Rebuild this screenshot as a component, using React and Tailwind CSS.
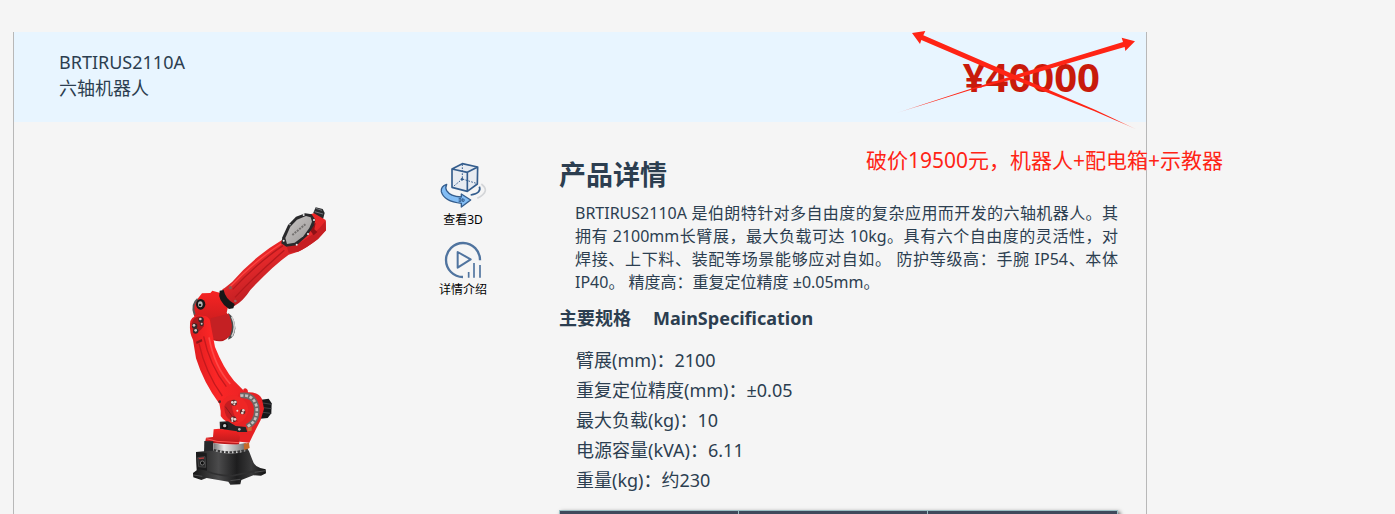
const specs = [
  { label: "臂展(mm)", value: "2100" },
  { label: "重复定位精度(mm)", value: "±0.05" },
  { label: "最大负载(kg)", value: "10" },
  { label: "电源容量(kVA)", value: "6.11" },
  { label: "重量(kg)", value: "约230" },
]

function RobotArm() {
  return (
    <svg viewBox="0 0 480 900" className="h-[300px] w-[160px] shrink-0" role="img" aria-label="BRTIRUS2110A">
      <defs>
        <linearGradient id="upper" x1="0" y1="0" x2="0.6" y2="1">
          <stop offset="0.3" stopColor="#f3211f" />
          <stop offset="0.55" stopColor="#e3282a" />
          <stop offset="0.75" stopColor="#c42024" />
        </linearGradient>
        <linearGradient id="lower" x1="0" y1="0.5" x2="1" y2="0.3">
          <stop offset="0" stopColor="#d81b1e" />
          <stop offset="0.4" stopColor="#fb2626" />
          <stop offset="1" stopColor="#e62224" />
        </linearGradient>
        <linearGradient id="joint" x1="0" y1="0" x2="0" y2="1">
          <stop offset="0" stopColor="#f82423" />
          <stop offset="1" stopColor="#b4191c" />
        </linearGradient>
        <linearGradient id="base" x1="0" y1="0" x2="1" y2="0">
          <stop offset="0" stopColor="#151515" />
          <stop offset="0.35" stopColor="#4b4b4c" />
          <stop offset="0.6" stopColor="#1d1d1e" />
          <stop offset="0.8" stopColor="#39393a" />
          <stop offset="1" stopColor="#111" />
        </linearGradient>
        <linearGradient id="steel" x1="0" y1="0" x2="1" y2="0">
          <stop offset="0" stopColor="#777" />
          <stop offset="0.3" stopColor="#e9e9e9" />
          <stop offset="0.7" stopColor="#a2a2a2" />
          <stop offset="1" stopColor="#606060" />
        </linearGradient>
        <linearGradient id="plate" x1="0" y1="0" x2="1" y2="1">
          <stop offset="0" stopColor="#c9c6c5" />
          <stop offset="1" stopColor="#9c9998" />
        </linearGradient>
      </defs>

      {/* forearm, wrist flange and cover plate */}
      <path d="M400 38 L407 22 L428 27 L434 39 L429 58 L405 54Z" fill="#28292b" />
      <path d="M407 25 L426 31 M404 35 L429 42" stroke="#72757a" strokeWidth="3" />
      <path d="M305 121 Q222 170 157 245 Q137 262 127 268 Q127 302 162 319 Q190 303 211 270 Q280 196 326 164 L354 155 Q378 145 414 117 L438 91 L437 60 L402 40 L370 48Z" fill="url(#upper)" />
      <path d="M158 268 Q236 185 309 137 M165 292 Q226 227 313 151" stroke="#b5191d" strokeWidth="4" fill="none" />
      <path d="M149 262 Q225 182 303 132" stroke="#ff4340" strokeWidth="4" fill="none" />
      <path d="M321 141 Q369 132 418 85 L437 62 L438 91 L414 117 Q378 145 354 155 L326 158Z" fill="#c61e22" />
      <path d="M390 91 L393 76 L407 69 L403 88 L412 96 L401 106Z" fill="#8e1015" />
      <path d="M307 112 L324 75 L348 50 L376 40 L395 43 L406 59 L402 76 L382 107 L350 136 L319 140 L304 130Z" fill="#29292b" />
      <path d="M316 114 L331 80 L351 59 L378 48 L392 52 L396 65 L388 84 L370 109 L344 128 L321 132Z" fill="url(#plate)" />
      <path d="M337 105 L377 72" stroke="#73706f" strokeWidth="6" strokeDasharray="6 3" />
      <g fill="#efefef">
        <circle cx="311" cy="122" r="3" />
        <circle cx="330" cy="74" r="2" />
        <circle cx="371" cy="45" r="3" />
        <circle cx="402" cy="60" r="3" />
        <circle cx="384" cy="102" r="3" />
        <circle cx="350" cy="134" r="3" />
      </g>
      <circle cx="151" cy="263" r="5" fill="#8f5551" />
      <circle cx="166" cy="303" r="4" fill="#92696a" />

      {/* elbow */}
      <path d="M145 339 Q166 354 166 385 Q165 412 145 419Z" fill="#4a4a4b" />
      <path d="M155 350 Q171 382 155 410" stroke="#d1d1d1" strokeWidth="5" fill="none" />
      <path d="M53 296 L66 280 L91 279 L97 272 L119 278 L145 316 L140 338 Q158 357 155 389 Q150 415 129 423 Q105 427 89 415 L42 348 L42 315Z" fill="url(#joint)" />
      <path d="M92 355 L146 341 Q158 367 151 406 Q122 429 94 414Z" fill="#c42023" />
      <path d="M119 272 L131 270 Q136 298 164 312 L160 325 L147 327 Q111 302 119 272Z" fill="#171718" />
      <path d="M44 344 Q33 313 53 297" stroke="#58595a" strokeWidth="6" fill="none" />
      <ellipse cx="62" cy="313" rx="14" ry="16" fill="#181818" />
      <ellipse cx="61" cy="313" rx="7" ry="9" fill="#b8b8b8" />
      <circle cx="60" cy="315" r="4" fill="#222" />

      {/* lower arm */}
      <path d="M30 372 Q30 350 57 346 L78 349 Q91 354 92 373 L105 441 Q130 504 162 542 L208 589 L192 652 L136 658 Q123 643 118 611 Q71 549 48 475 L39 420 Q28 399 30 372Z" fill="url(#lower)" />
      <path d="M71 409 Q88 494 139 560 M57 431 Q76 518 127 588" stroke="#c4191d" strokeWidth="4" fill="none" />
      <path d="M87 412 Q103 499 151 552" stroke="#ff4a48" strokeWidth="5" fill="none" />
      <path d="M35 371 Q38 350 63 349 Q76 352 71 379 Q58 399 41 400Z" fill="#a7191d" />
      <path d="M48 425 L65 417 L67 424 L50 432Z" fill="#8d1719" />
      <g fill="#302a2a">
        <circle cx="63" cy="359" r="8" />
        <circle cx="44" cy="378" r="8" />
        <circle cx="47" cy="393" r="8" />
        <circle cx="65" cy="372" r="6" />
      </g>
      <g fill="#d8c5c3">
        <circle cx="61" cy="357" r="4" />
        <circle cx="42" cy="376" r="4" />
        <circle cx="47" cy="391" r="4" />
        <circle cx="65" cy="371" r="3" />
      </g>

      {/* shoulder */}
      <path d="M243 599 L266 596 L275 610 L274 640 L263 654 L241 656Z" fill="#161719" />
      <path d="M249 609 L274 613 M250 623 L274 626 M249 637 L272 640" stroke="#434447" strokeWidth="3" />
      <path d="M176 581 L190 576 L190 568 Q197 561 203 570 L204 577 Q236 576 246 597 L252 626 L242 660 L218 707 L208 728 L166 724 L130 680Z" fill="#e62224" />
      <path d="M181 587 Q219 582 229 617 Q237 662 201 680" fill="none" stroke="#6d6866" strokeWidth="17" />
      <path d="M181 587 Q219 582 229 617 Q237 662 201 680" fill="none" stroke="#c5c0be" strokeWidth="8" strokeDasharray="9 5" />
      <path d="M122 621 Q127 586 160 585 Q200 593 205 628 Q202 661 174 671 Q138 674 122 648Z" fill="#ef2625" />
      <path d="M133 619 Q138 600 160 599 Q148 627 174 665 Q133 666 133 619Z" fill="#c41d20" />
      <path d="M136 620 L156 648" stroke="#76171a" strokeWidth="2" />
      <g fill="#59292a">
        <circle cx="162" cy="608" r="9" />
        <circle cx="188" cy="635" r="8" />
        <circle cx="160" cy="658" r="9" />
        <circle cx="119" cy="605" r="4" />
      </g>
      <g fill="#ead8d3">
        <circle cx="157" cy="607" r="4" />
        <circle cx="166" cy="606" r="4" />
        <circle cx="163" cy="613" r="3" />
        <circle cx="172" cy="632" r="3" />
        <circle cx="190" cy="631" r="4" />
        <circle cx="187" cy="639" r="4" />
        <circle cx="157" cy="656" r="4" />
        <circle cx="165" cy="658" r="4" />
        <circle cx="157" cy="663" r="3" />
      </g>

      {/* turntable */}
      <path d="M119 665 L144 664 L167 678 L197 681 L202 696 L160 696 L120 687Z" fill="#232325" />
      <circle cx="134" cy="678" r="10" fill="#101011" />
      <circle cx="134" cy="677" r="5" fill="#c6c6c6" />
      <circle cx="178" cy="688" r="4" fill="#b8b8b8" />
      <path d="M202 683 L215 680 L215 692 L203 694Z" fill="#ce6a36" />
      <path d="M101 688 L118 686 L171 694 L180 710 L177 735 L101 730 L76 723 L78 713 L99 711Z" fill="url(#joint)" />
      <path d="M79 716 L111 724 L177 728" stroke="#ff5a55" strokeWidth="3" fill="none" />
      <path d="M101 729 Q139 741 197 729 L204 750 Q156 765 101 750Z" fill="url(#steel)" />
      <path d="M101 750 Q153 765 207 748" stroke="#39393a" strokeWidth="7" strokeDasharray="8 4" fill="none" />
      <path d="M191 731 L207 728 L209 744 L193 750Z" fill="#c66a28" />

      {/* base */}
      <path d="M73 723 L100 724 L100 761 L72 758Z" fill="#262729" />
      <path d="M48 756 L79 753 L101 752 Q154 770 206 751 L217 779 Q223 800 241 804 L257 808 L258 820 L243 827 L220 826 L184 840 L181 853 L151 854 L145 845 L80 834 L64 840 L40 832 L39 819 L50 811Z" fill="url(#base)" />
      <path d="M48 757 L80 760 L81 812 L51 806Z" fill="#1b1b1c" />
      <path d="M53 773 L75 770 L77 802 L56 800Z" fill="#29292a" stroke="#555" strokeWidth="2" />
      <path d="M56 776 L72 774" stroke="#b0393a" strokeWidth="4" />
      <circle cx="67" cy="789" r="6" fill="#0c0c0c" stroke="#989898" strokeWidth="2" />
      <path d="M81 814 Q117 829 159 827 L222 814" stroke="#303031" strokeWidth="5" fill="none" />
      <path d="M151 842 L181 838 M41 825 L67 829 M224 817 L257 812" stroke="#4d4d4e" strokeWidth="3" />
    </svg>
  )
}

function View3dIcon() {
  return (
    <svg viewBox="27 36 144 144" className="size-12" fill="none" aria-hidden="true">
      <path d="M66 57 L97 41 L143 51 L142 102 L112 124 L66 112Z" fill="#e7ebf1" />
      <path d="M66 57 L97 41 L143 51 L112 67Z M66 57 L66 112 L112 124 L112 67 M143 51 L142 102 L112 124" stroke="#345d8d" strokeWidth="5" strokeLinejoin="round" />
      <path d="M97 43 L97 87 L142 101 M97 87 L67 112" stroke="#345d8d" strokeWidth="3" strokeDasharray="5 4" />
      <circle cx="96" cy="88" r="4" fill="#345d8d" />
      <path d="M50 103 Q32 108 34 125 Q42 155 94 160 L94 171 L122 150 L94 132 L94 141 Q60 139 50 122 Q45 113 50 103Z" fill="#83bdf4" stroke="#345d8d" strokeWidth="4" strokeLinejoin="round" />
      <path d="M86 146 h7 v8 h-7 M86 150 h6 M97 146 q9 1 5 8 h-5z" stroke="#345d8d" strokeWidth="3" />
      <path d="M148 110 Q156 129 122 135" stroke="#345d8d" strokeWidth="5" />
      <path d="M154 102 Q183 124 142 145" stroke="#d3d5d8" strokeWidth="5" />
    </svg>
  )
}

function IntroIcon() {
  return (
    <svg viewBox="27 270 144 120" className="h-10 w-12" fill="none" stroke="#50749f" strokeWidth="7" aria-hidden="true">
      <path d="M99 381 A51 51 0 1 1 150 331" />
      <path d="M83 306 L83 353 L122 328Z" strokeWidth="6" strokeLinejoin="round" />
      <path d="M116 366 V383 M132 339 V383 M150 345 V383" strokeWidth="5" />
    </svg>
  )
}

/* two hand-drawn arrows crossing out the old price */
function StrikeArrows() {
  return (
    <svg viewBox="0 0 840 360" className="pointer-events-none absolute -top-3 -right-[14px] h-[120px] w-[280px]" aria-hidden="true">
      <defs>
        <linearGradient id="fadeLeft">
          <stop offset="0" stopColor="#ff2415" stopOpacity="0.2" />
          <stop offset="0.1" stopColor="#ff2415" />
        </linearGradient>
        <linearGradient id="fadeRight">
          <stop offset="0.9" stopColor="#ff2415" />
          <stop offset="1" stopColor="#ff2415" stopOpacity="0.2" />
        </linearGradient>
      </defs>
      <path d="M50 279 L270 207 L400 167 L729 66 L725 53 L765 64 L736 93 L734 81 L405 176 L272 210Z" fill="url(#fadeLeft)" />
      <path d="M96 39 L136 33 L130 46 L400 163 L408 167 L645 269 L772 329 L642 273 L396 176 L124 60 L120 72Z" fill="url(#fadeRight)" />
    </svg>
  )
}

function ProductHeader() {
  return (
    <header className="relative flex h-[90px] items-start justify-between bg-[#e8f5ff] pt-[17px] pr-[46px] pl-[45px]">
      <div className="text-lg leading-[26px]">
        <h1>BRTIRUS2110A</h1>
        <p>六轴机器人</p>
      </div>
      <strong className="text-[40px] leading-[56px] font-bold text-[#c81a0b]">¥40000</strong>
      <StrikeArrows />
      <p className="absolute top-[113px] -right-[77px] text-[21px] leading-[30px] whitespace-nowrap text-[#ff2415]">
        破价19500元，机器人+配电箱+示教器
      </p>
    </header>
  )
}

function ProductMedia() {
  return (
    <div className="flex w-[545px] shrink-0 justify-end pr-[72px]">
      <div className="mt-[78px] mr-[99px]">
        <RobotArm />
      </div>
      <div className="mt-10 flex flex-col items-center gap-[10px] text-xs leading-5 text-black">
        <button type="button" className="flex w-12 flex-col items-center whitespace-nowrap">
          <View3dIcon />
          查看3D
        </button>
        <button type="button" className="flex w-12 flex-col items-center whitespace-nowrap">
          <IntroIcon />
          详情介绍
        </button>
      </div>
    </div>
  )
}

function ProductDetail() {
  return (
    <section className="min-w-0 flex-1 pt-[35px] pr-7">
      <h2 className="text-[27px] leading-9 font-bold">产品详情</h2>
      <p className="mt-[9px] pl-4 text-justify text-base leading-[23px]">
        BRTIRUS2110A 是伯朗特针对多自由度的复杂应用而开发的六轴机器人。其拥有 2100mm长臂展，最大负载可达 10kg。具有六个自由度的灵活性，对焊接、上下料、装配等场景能够应对自如。 防护等级高：手腕 IP54、本体 IP40。 精度高：重复定位精度 ±0.05mm。
      </p>
      <h3 className="mt-[10px] flex gap-[22px] text-lg leading-7 font-bold">
        <span>主要规格</span>
        <span>MainSpecification</span>
      </h3>
      <ul className="mt-[13px] pl-[17px] text-lg leading-[30px]">
        {specs.map((spec) => (
          <li key={spec.label}>{spec.label}：{spec.value}</li>
        ))}
      </ul>
      <table className="mt-[15px] w-full table-fixed border-collapse bg-[#3f4a5c] shadow-[2px_2px_4px_#555]">
        <colgroup>
          <col className="w-[32%]" />
          <col className="w-[34%]" />
          <col className="w-[34%]" />
        </colgroup>
        <thead>
          <tr className="h-10">
            <th className="border border-[#9cc0c5]" />
            <th className="border border-[#9cc0c5]" />
            <th className="border border-[#9cc0c5]" />
          </tr>
        </thead>
      </table>
    </section>
  )
}

export default function App() {
  return (
    <div className="h-screen overflow-hidden bg-[#f5f5f5] pt-8 pl-[13px] font-['Noto_Sans','Noto_Sans_CJK_SC',sans-serif] text-[#2c3e50]" lang="zh-CN">
      <main className="min-h-full w-full max-w-[1134px] border-x border-[#b8b8b8]">
        <ProductHeader />
        <div className="flex">
          <ProductMedia />
          <ProductDetail />
        </div>
      </main>
    </div>
  )
}
